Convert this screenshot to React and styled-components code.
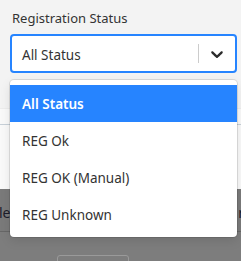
import React from "react";
import styled, { createGlobalStyle } from "styled-components";

const Global = createGlobalStyle`
    html, body {
        margin: 0;
        padding: 0;
        background: #f3f3f3;
    }
    body {
        font-family: "Noto Sans", "Open Sans", sans-serif;
        color: #333;
    }
`;

const Page = styled.div`
    position: relative;
    width: 241px;
    height: 261px;
    overflow: hidden;
    display: flex;
    flex-direction: column;
    background: #f3f3f3;
`;

const Filter = styled.div`
    flex-shrink: 0;
    padding: 9px 4px 0 10px;
    position: relative;
    z-index: 2;
`;

const Label = styled.div`
    font-size: 13px;
    line-height: 18px;
    color: #333;
    margin-bottom: 7px;
    padding-left: 2px;
`;

const SelectWrap = styled.div`
    position: relative;
`;

const Control = styled.div`
    display: flex;
    align-items: center;
    height: 39px;
    box-sizing: border-box;
    border: 2px solid #2684ff;
    border-radius: 4px;
    background: #fff;
`;

const Value = styled.div`
    flex: 1;
    padding: 2px 10px 0;
    font-size: 13.5px;
    color: #333;
`;

const Separator = styled.span`
    width: 1px;
    align-self: stretch;
    margin: 8px 0;
    background: #ccc;
`;

const Indicator = styled.div`
    display: flex;
    align-items: center;
    justify-content: center;
    width: 36px;
    height: 100%;
    color: #2b2b2b;
`;

const Menu = styled.div`
    position: absolute;
    top: calc(100% + 7px);
    left: 0;
    right: 0;
    background: #fff;
    border-radius: 4px;
    padding: 5px 0 4px;
    box-shadow: 0 0 0 1px hsla(0, 0%, 0%, 0.1), 0 4px 11px hsla(0, 0%, 0%, 0.1);
`;

const Option = styled.div`
    height: 37px;
    display: flex;
    align-items: center;
    padding: 0 12px;
    font-size: 13.5px;
    color: ${(props) => (props.selected ? "#fff" : "#333")};
    background: ${(props) => (props.selected ? "#2684ff" : "transparent")};
    font-weight: ${(props) => (props.selected ? 600 : 400)};
`;

const Panel = styled.div`
    flex-shrink: 0;
    margin-top: 35px;
    height: 80px;
    background: #f9f9f9;
    border-top: 1px solid #ececec;
`;

const PanelLine = styled.div`
    margin-top: 15px;
    height: 1px;
    background: #c7d0d8;
`;

const Backdrop = styled.div`
    flex: 1;
    min-height: 0;
    background: #7a7a7a;
    display: flex;
    flex-direction: column;
`;

const TextRow = styled.div`
    flex-shrink: 0;
    height: 43px;
    display: flex;
    justify-content: space-between;
    align-items: center;
    padding-top: 4px;
    box-sizing: border-box;
    font-size: 14px;
    color: #1c1c2a;
    border-bottom: 1px solid #676767;
`;

const Cut = styled.span`
    margin-left: ${(props) => props.left || 0}px;
    margin-right: ${(props) => props.right || 0}px;
`;

const Footer = styled.div`
    flex: 1;
    background: #7d7d7d;
    padding: 23px 0 0 57px;
`;

const GhostButton = styled.div`
    width: 70px;
    height: 30px;
    border: 1px solid #9a9a9a;
    border-radius: 3px;
`;

const Chevron = () => (
    <svg width="20" height="20" viewBox="0 0 20 20" fill="currentColor">
        <path d="M4.516 7.548c0.436-0.446 1.043-0.481 1.576 0l3.908 3.747 3.908-3.747c0.533-0.481 1.141-0.446 1.574 0 0.436 0.445 0.408 1.197 0 1.615-0.406 0.418-4.695 4.502-4.695 4.502-0.217 0.223-0.502 0.335-0.787 0.335s-0.57-0.112-0.789-0.335c0 0-4.287-4.084-4.695-4.502s-0.436-1.17 0-1.615z" />
    </svg>
);

const options = ["All Status", "REG Ok", "REG OK (Manual)", "REG Unknown"];

const App = () => {
    return (
        <>
            <Global />
            <Page>
                <Filter>
                    <Label>Registration Status</Label>
                    <SelectWrap>
                        <Control>
                            <Value>All Status</Value>
                            <Separator />
                            <Indicator>
                                <Chevron />
                            </Indicator>
                        </Control>
                        <Menu>
                            {options.map((o, i) => (
                                <Option key={o} selected={i === 0}>
                                    {o}
                                </Option>
                            ))}
                        </Menu>
                    </SelectWrap>
                </Filter>
                <Panel>
                    <PanelLine />
                </Panel>
                <Backdrop>
                    <TextRow>
                        <Cut left={-1}>le</Cut>
                        <Cut right={-3}>r</Cut>
                    </TextRow>
                    <Footer>
                        <GhostButton />
                    </Footer>
                </Backdrop>
            </Page>
        </>
    );
};

export default App;
